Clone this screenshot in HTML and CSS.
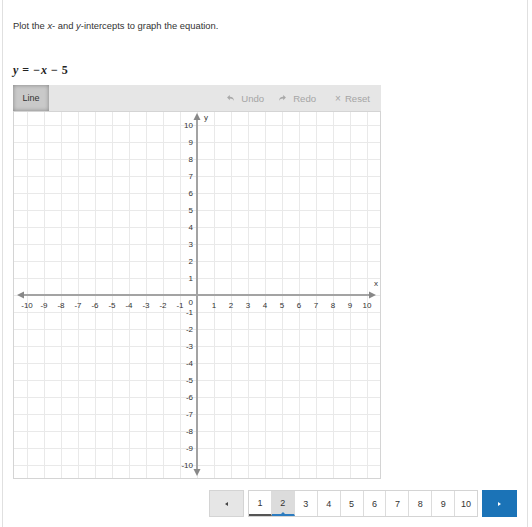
FILE: index.html
```html
<!DOCTYPE html>
<html>
<head>
<meta charset="utf-8">
<link rel="stylesheet" href="styles.css">
</head>
<body>
<div class="page">
  <p class="prompt">Plot the <i>x</i>- and <i>y</i>-intercepts to graph the equation.</p>
  <p class="equation"><span class="var">y</span><span class="rel">=</span><span class="op">−</span><span class="var">x</span><span class="bin">−</span><span class="num">5</span></p>

  <div class="widget">
    <div class="toolbar">
      <button class="tool-line">Line</button>
      <div class="actions">
        <span class="action"><svg class="ico" width="7" height="6" viewBox="0 0 8 7"><path d="M0 3 L3.2 0 V2 C6.2 2 8 3.5 8 7 C7 5 5.6 4.2 3.2 4.2 V6 Z" fill="#a9a9a9"/></svg>Undo</span>
        <span class="action"><svg class="ico" width="7" height="6" viewBox="0 0 8 7"><path d="M8 3 L4.8 0 V2 C1.8 2 0 3.5 0 7 C1 5 2.4 4.2 4.8 4.2 V6 Z" fill="#a9a9a9"/></svg>Redo</span>
        <span class="action"><span class="x">×</span>Reset</span>
      </div>
    </div>
    <svg class="grid" width="368" height="368" viewBox="0 0 368 368">
      <defs>
        <pattern id="cells" patternUnits="userSpaceOnUse" x="14" y="14" width="17" height="17">
          <path d="M0.5 0 V17 M0 0.5 H17" stroke="#e9e9e9" stroke-width="1" fill="none"/>
        </pattern>
      </defs>
      <rect x="0" y="0" width="368" height="368" fill="#fff"/>
      <rect x="0" y="0" width="368" height="368" fill="url(#cells)"/>
      <rect x="0.5" y="0.5" width="367" height="367" fill="none" stroke="#d4d4d4"/>
      <rect x="9" y="183" width="348" height="2" fill="#a3a3a3"/>
      <rect x="183" y="9" width="2" height="349" fill="#a3a3a3"/>
      <polygon points="4,184 11,180.5 11,187.5" fill="#888"/>
      <polygon points="363,184 356,180.5 356,187.5" fill="#888"/>
      <polygon points="184,2 180.5,9 187.5,9" fill="#888"/>
      <polygon points="184,365 180.5,358 187.5,358" fill="#888"/>
      <g class="lbl">
        <text x="191" y="9">y</text>
        <text x="361" y="175">x</text>
      </g>
      <g class="lbl mid">
        <text x="14" y="197">-10</text>
        <text x="31" y="197">-9</text>
        <text x="48" y="197">-8</text>
        <text x="65" y="197">-7</text>
        <text x="82" y="197">-6</text>
        <text x="99" y="197">-5</text>
        <text x="116" y="197">-4</text>
        <text x="133" y="197">-3</text>
        <text x="150" y="197">-2</text>
        <text x="167" y="197">-1</text>
        <text x="201" y="197">1</text>
        <text x="218" y="197">2</text>
        <text x="235" y="197">3</text>
        <text x="252" y="197">4</text>
        <text x="269" y="197">5</text>
        <text x="286" y="197">6</text>
        <text x="303" y="197">7</text>
        <text x="320" y="197">8</text>
        <text x="337" y="197">9</text>
        <text x="354" y="197">10</text>
      </g>
      <g class="lbl end">
        <text x="180" y="17">10</text>
        <text x="180" y="34">9</text>
        <text x="180" y="51">8</text>
        <text x="180" y="68">7</text>
        <text x="180" y="85">6</text>
        <text x="180" y="102">5</text>
        <text x="180" y="119">4</text>
        <text x="180" y="136">3</text>
        <text x="180" y="153">2</text>
        <text x="180" y="170">1</text>
        <text x="180" y="194">0</text>
        <text x="180" y="204">-1</text>
        <text x="180" y="221">-2</text>
        <text x="180" y="238">-3</text>
        <text x="180" y="255">-4</text>
        <text x="180" y="272">-5</text>
        <text x="180" y="289">-6</text>
        <text x="180" y="306">-7</text>
        <text x="180" y="323">-8</text>
        <text x="180" y="340">-9</text>
        <text x="180" y="357">-10</text>
      </g>
    </svg>
  </div>

  <nav class="pager">
    <button class="nav prev"><span class="tri-left"></span></button>
    <div class="pages">
      <span class="pg done">1</span>
      <span class="pg current">2</span>
      <span class="pg">3</span>
      <span class="pg">4</span>
      <span class="pg">5</span>
      <span class="pg">6</span>
      <span class="pg">7</span>
      <span class="pg">8</span>
      <span class="pg">9</span>
      <span class="pg">10</span>
    </div>
    <button class="nav next"><span class="tri-right"></span></button>
  </nav>
</div>
</body>
</html>
```

FILE: styles.css
```css
html, body {
  margin: 0;
  padding: 0;
  background: #fff;
}

body {
  font-family: "Liberation Sans", Arial, sans-serif;
  color: #333;
}

.page {
  box-sizing: border-box;
  margin-left: 2px;
  width: 526px;
  min-height: 527px;
  border-left: 1px solid #e0e0e0;
  border-right: 1px solid #e0e0e0;
  padding: 20px 0 0 10px;
}

.prompt {
  margin: 0;
  font-size: 9.4px;
  line-height: 12px;
  color: #333;
}

.equation {
  margin: 31px 0 0 0;
  font-family: "Liberation Serif", "DejaVu Serif", "Times New Roman", serif;
  font-size: 12px;
  line-height: 14px;
  font-weight: bold;
  color: #222;
  display: flex;
  align-items: baseline;
}

.equation .var { font-style: italic; }
.equation .rel { margin: 0 4px; }
.equation .op { margin-right: 1px; }
.equation .bin { margin: 0 4px; }

.widget {
  margin-top: 8px;
  width: 368px;
}

.toolbar {
  display: flex;
  align-items: center;
  justify-content: space-between;
  height: 26px;
  background: #e6e6e6;
}

.tool-line {
  width: 36px;
  height: 26px;
  border: none;
  padding: 0;
  background: #c9c9c9;
  box-shadow: inset 0 0 4px rgba(0, 0, 0, 0.35);
  font-family: "Liberation Sans", Arial, sans-serif;
  font-size: 9px;
  color: #333;
}

.actions {
  display: flex;
  align-items: center;
  padding-right: 11px;
  font-size: 9.6px;
  color: #a5a5a5;
}

.action {
  display: flex;
  align-items: center;
}

.action + .action { margin-left: 15px; }
.action:last-child { margin-left: 19px; }

.ico {
  margin-right: 7px;
}

.x {
  font-size: 10px;
  margin-right: 4px;
}

.grid {
  display: block;
}

.lbl text {
  font-family: "Liberation Sans", Arial, sans-serif;
  font-size: 8px;
  fill: #333;
}

.lbl.mid text { text-anchor: middle; }
.lbl.end text { text-anchor: end; }

.pager {
  display: flex;
  gap: 4px;
  margin: 11px 0 0 196px;
  height: 27px;
}

.nav {
  box-sizing: border-box;
  width: 35px;
  height: 27px;
  padding: 0;
  display: flex;
  align-items: center;
  justify-content: center;
}

.prev {
  background: #e6e6e6;
  border: 1px solid #d4d4d4;
}

.next {
  background: #1b73b7;
  border: 1px solid #1b73b7;
}

.tri-left {
  width: 0;
  height: 0;
  border-top: 2px solid transparent;
  border-bottom: 2px solid transparent;
  border-right: 3px solid #444;
}

.tri-right {
  width: 0;
  height: 0;
  border-top: 2px solid transparent;
  border-bottom: 2px solid transparent;
  border-left: 3px solid #fff;
}

.pages {
  box-sizing: border-box;
  width: 230px;
  height: 27px;
  display: flex;
  border: 1px solid #d4d4d4;
}

.pg {
  position: relative;
  box-sizing: border-box;
  flex: 1;
  display: flex;
  align-items: center;
  justify-content: center;
  font-size: 9px;
  color: #333;
  border-right: 1px solid #dcdcdc;
}

.pg:last-child { border-right: none; }

.pg.done {
  border-bottom: 2px solid #555;
}

.pg.current {
  background: #dcdcdc;
  border-bottom: 2px solid #2c7cc0;
}

.pg.current::after {
  content: "";
  position: absolute;
  left: 50%;
  bottom: 0;
  margin-left: -2px;
  border-left: 2px solid transparent;
  border-right: 2px solid transparent;
  border-bottom: 2px solid #2c7cc0;
}
```
